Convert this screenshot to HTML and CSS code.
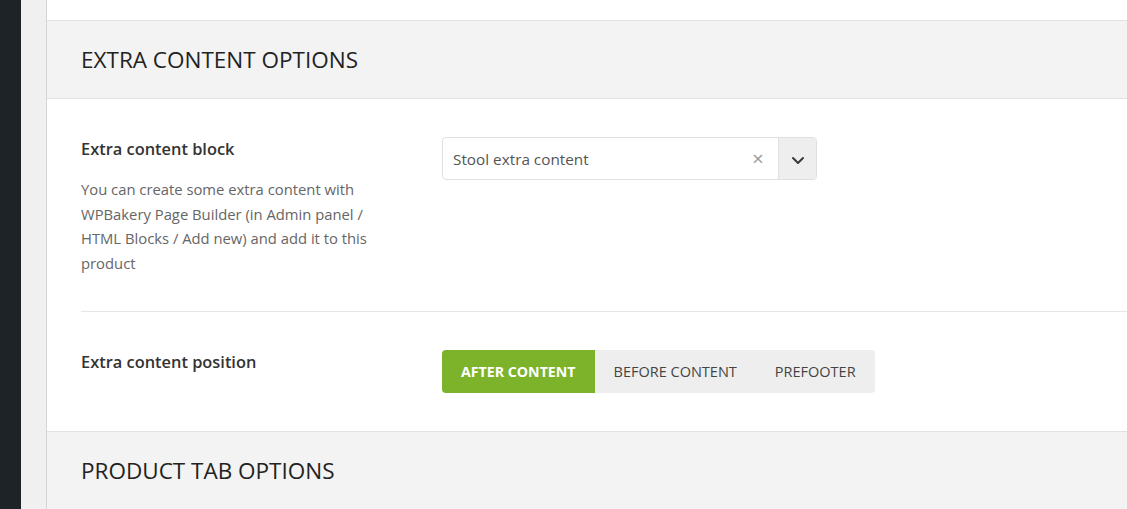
FILE: index.html
```html
<!DOCTYPE html>
<html>
<head>
<meta charset="utf-8">
<link rel="stylesheet" href="styles.css">
</head>
<body>
<div class="layout">
  <div class="adminbar"></div>
  <div class="gutter"></div>
  <div class="panel">
    <div class="prev-section"></div>
    <div class="section-head"><h2 class="section-title">EXTRA CONTENT OPTIONS</h2></div>
    <div class="section-body">
      <div class="field-row">
        <div class="field-label">
          <div class="label-title">Extra content block</div>
          <p class="label-desc">You can create some extra content with WPBakery Page Builder (in Admin panel / HTML Blocks / Add new) and add it to this product</p>
        </div>
        <div class="field-control">
          <div class="select">
            <span class="select-value">Stool extra content</span>
            <span class="select-clear">×</span>
            <span class="select-arrow">
              <svg width="14" height="9" viewBox="0 0 14 9"><path d="M2 2 L7 7 L12 2" fill="none" stroke="#3a3a3a" stroke-width="2" stroke-linecap="round" stroke-linejoin="round"/></svg>
            </span>
          </div>
        </div>
      </div>
      <div class="field-row last">
        <div class="field-label">
          <div class="label-title">Extra content position</div>
        </div>
        <div class="field-control">
          <div class="btn-group">
            <span class="btn active">AFTER CONTENT</span>
            <span class="btn">BEFORE CONTENT</span>
            <span class="btn">PREFOOTER</span>
          </div>
        </div>
      </div>
    </div>
    <div class="section-head tail"><h2 class="section-title">PRODUCT TAB OPTIONS</h2></div>
  </div>
</div>
</body>
</html>
```
FILE: styles.css
```css
html, body {
  margin: 0;
  padding: 0;
  height: 100%;
  overflow: hidden;
}
body {
  font-family: "Open Sans", "Noto Sans", sans-serif;
  color: #333;
  background: #f0f0f1;
}
.layout {
  display: flex;
  height: 509px;
}
.adminbar {
  width: 21px;
  background: #1d2327;
  flex: none;
}
.gutter {
  width: 25px;
  background: #f0f0f1;
  flex: none;
}
.panel {
  flex: 1;
  background: #fff;
  border-left: 1px solid #d5d5d5;
  display: flex;
  flex-direction: column;
  overflow: hidden;
}
.prev-section {
  height: 20px;
  background: #fff;
  flex: none;
}
.section-head {
  background: #f3f3f3;
  border-top: 1px solid #e2e2e2;
  border-bottom: 1px solid #e2e2e2;
  height: 77px;
  display: flex;
  align-items: center;
  padding-left: 34px;
  flex: none;
}
.section-head.tail {
  height: auto;
  flex: 1 0 auto;
  align-items: flex-start;
  padding-top: 23px;
  border-bottom: none;
}
.section-title {
  margin: 0;
  font-size: 22.5px;
  line-height: 31px;
  font-weight: 500;
  color: #222;
}
.section-body {
  padding-left: 34px;
  flex: none;
}
.field-row {
  display: flex;
  padding: 38px 0 36px;
  border-bottom: 1px solid #e6e6e6;
}
.field-row.last {
  border-bottom: none;
  padding: 38px 0 38px;
}
.field-label {
  width: 320px;
  margin-right: 41px;
  flex: none;
}
.label-title {
  font-size: 16.4px;
  line-height: 24px;
  font-weight: 600;
  color: #333;
}
.label-desc {
  margin: 16px 0 0;
  font-size: 14.8px;
  line-height: 24.6px;
  color: #666;
}
.select {
  width: 373px;
  height: 41px;
  border: 1px solid #e0e0e0;
  border-radius: 4px;
  display: flex;
  align-items: center;
  overflow: hidden;
}
.select-value {
  flex: 1;
  padding-left: 10px;
  font-size: 15.3px;
  color: #555;
}
.select-clear {
  font-size: 20px;
  color: #999;
  width: 20px;
  margin-right: 10px;
  text-align: center;
}
.select-arrow {
  width: 38px;
  height: 41px;
  background: #eeeeee;
  border-left: 1px solid #e0e0e0;
  display: flex;
  align-items: center;
  justify-content: center;
  padding-top: 4px;
  box-sizing: border-box;
}
.btn-group {
  display: inline-flex;
  background: #eeeeee;
  border-radius: 4px;
  overflow: hidden;
  height: 43px;
}
.btn {
  display: flex;
  align-items: center;
  padding: 0 19px;
  font-size: 14.5px;
  font-weight: 500;
  color: #444;
}
.btn.active {
  background: #7cb32b;
  color: #fff;
  font-size: 14.2px;
  font-weight: 700;
}
```
